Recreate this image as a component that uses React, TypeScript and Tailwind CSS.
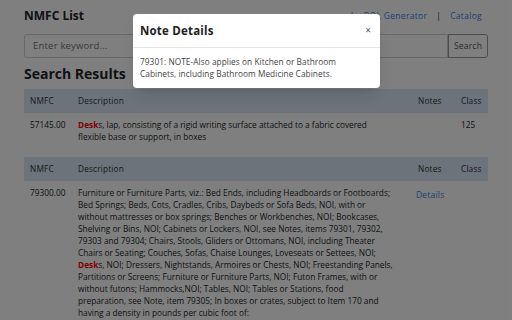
import React from "react";

const font = { fontFamily: '"Open Sans", "Noto Sans", sans-serif' };

function Hi() {
  return <span className="font-bold text-[#ff0000]">Desk</span>;
}

const row2Lines: React.ReactNode[] = [
  "Furniture or Furniture Parts, viz.: Bed Ends, including Headboards or Footboards;",
  "Bed Springs; Beds, Cots, Cradles, Cribs, Daybeds or Sofa Beds, NOI, with or",
  "without mattresses or box springs; Benches or Workbenches, NOI; Bookcases,",
  "Shelving or Bins, NOI; Cabinets or Lockers, NOI, see Notes, items 79301, 79302,",
  "79303 and 79304; Chairs, Stools, Gliders or Ottomans, NOI, including Theater",
  "Chairs or Seating; Couches, Sofas, Chaise Lounges, Loveseats or Settees, NOI;",
  <>
    <Hi />s, NOI; Dressers, Nightstands, Armoires or Chests, NOI; Freestanding Panels,
  </>,
  "Partitions or Screens; Furniture or Furniture Parts, NOI; Futon Frames, with or",
  "without futons; Hammocks,NOI; Tables, NOI; Tables or Stations, food",
  "preparation, see Note, item 79305; In boxes or crates, subject to Item 170 and",
  "having a density in pounds per cubic foot of:",
];

function Header() {
  return (
    <div className="flex h-[24px] items-center bg-[#dae6f6] text-[8.3px] tracking-[0.15px] text-[#333]">
      <div className="w-[48px] shrink-0 pl-[6px]">NMFC</div>
      <div className="flex-1 pl-[6px]">Description</div>
      <div className="w-[43px] shrink-0">Notes</div>
      <div className="w-[27px] shrink-0">Class</div>
    </div>
  );
}

export default function App() {
  return (
    <div className="relative h-[320px] w-[512px] overflow-hidden bg-white text-[#212529]" style={font}>
      <div className="px-[24px] pt-[6px]">
        <div className="flex h-[20px] items-center justify-between">
          <div className="text-[12px] font-bold">NMFC List</div>
          <div className="flex items-center gap-[9px] pr-[6px] text-[8.5px] tracking-[0.3px] text-[#3f80e6]">
            <span className="text-[#333]">|</span>
            <span>BOL Generator</span>
            <span className="text-[#333]">|</span>
            <span>Catalog</span>
          </div>
        </div>
        <div className="mt-[8px] flex h-[24px]">
          <div className="flex flex-1 items-center rounded-l-[3px] border border-[#d0d0d0] pl-[8px] text-[9.5px] tracking-[0.2px] text-[#6c757d]">
            Enter keyword...
          </div>
          <div className="flex w-[40px] items-center justify-center rounded-r-[3px] border border-[#999] text-[8.5px] tracking-[0.2px] text-[#555]">
            Search
          </div>
        </div>
        <div className="mt-[6px] h-[20px] text-[14px] font-bold leading-[20px]">Search Results</div>
        <div className="mt-[5px]">
          <Header />
          <div className="flex py-[6px] text-[8.3px] leading-[12px]">
            <div className="w-[48px] shrink-0 pl-[6px]">57145.00</div>
            <div className="flex-1 pl-[6px]">
              <div className="whitespace-nowrap">
                <Hi />s, lap, consisting of a rigid writing surface attached to a fabric covered
              </div>
              <div>flexible base or support, in boxes</div>
            </div>
            <div className="w-[43px] shrink-0"></div>
            <div className="w-[27px] shrink-0">125</div>
          </div>
        </div>
        <div className="mt-[8px]">
          <Header />
          <div className="flex py-[6px] text-[8.3px] leading-[12px]">
            <div className="w-[48px] shrink-0 pl-[6px]">79300.00</div>
            <div className="flex-1 pl-[6px]">
              {row2Lines.map((l, i) => (
                <div key={i} className="whitespace-nowrap">{l}</div>
              ))}
            </div>
            <div className="-ml-[2px] mr-[2px] w-[43px] shrink-0 pt-[2px] text-[8.5px] tracking-[0.2px] text-[#3f80e6]">Details</div>
            <div className="w-[27px] shrink-0"></div>
          </div>
        </div>
      </div>

      <div className="absolute inset-0 bg-black/50" />

      <div className="absolute left-[133px] top-[14px] w-[247px] rounded-[4px] bg-white shadow-lg">
        <div className="flex h-[34px] items-center justify-between border-b border-[#e5e5e5] pl-[7px] pr-[9px]">
          <div className="text-[11.5px] font-bold tracking-[0.2px] text-[#222]">Note Details</div>
          <div className="text-[10px] text-[#555]">×</div>
        </div>
        <div className="px-[7px] py-[8px] text-[8.3px] leading-[12px] tracking-[0.05px] text-[#444]">
          <div>79301: NOTE-Also applies on Kitchen or Bathroom</div>
          <div>Cabinets, including Bathroom Medicine Cabinets.</div>
        </div>
      </div>
    </div>
  );
}
